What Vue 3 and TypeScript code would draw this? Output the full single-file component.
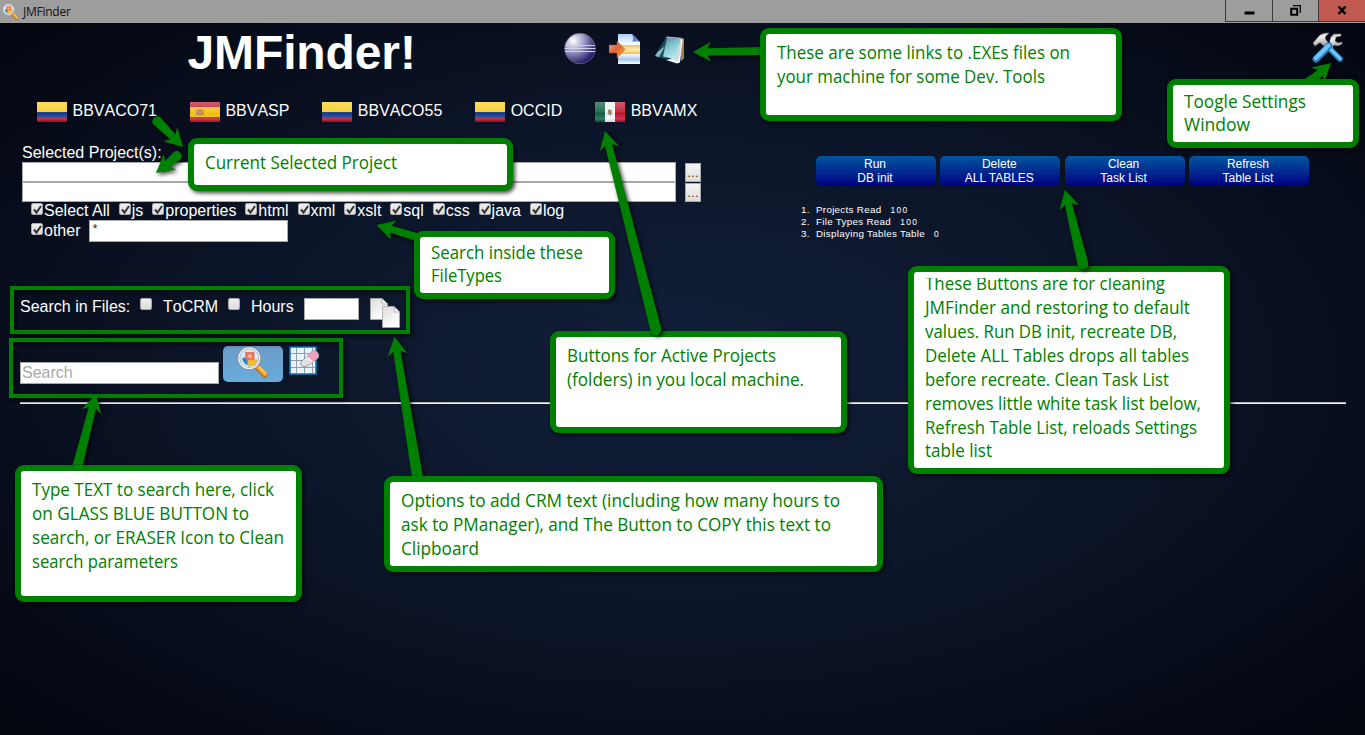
<script setup lang="ts">
interface Project { name: string; flag: 'co' | 'es' | 'mx' }
interface Line { t: string; y: number; w: number }
interface Callout { x: number; y: number; w: number; h: number; tx: number; lines: Line[]; clip?: number }
interface Arrow { from: [number, number]; to: [number, number]; tail: number; round?: boolean; under?: boolean }

const projects: Project[] = [
  { name: 'BBVACO71', flag: 'co' },
  { name: 'BBVASP', flag: 'es' },
  { name: 'BBVACO55', flag: 'co' },
  { name: 'OCCID', flag: 'co' },
  { name: 'BBVAMX', flag: 'mx' },
]
const fileTypes = ['Select All', 'js', 'properties', 'html', 'xml', 'xslt', 'sql', 'css', 'java', 'log']
const actions = [['Run', 'DB init'], ['Delete', 'ALL TABLES'], ['Clean', 'Task List'], ['Refresh', 'Table List']]
const tasks = [
  { label: 'Projects Read', value: '100' },
  { label: 'File Types Read', value: '100' },
  { label: 'Displaying Tables Table', value: '0' },
]

const callouts: Callout[] = [
  { x: 760, y: 28, w: 362, h: 93, tx: 777, lines: [
    { t: 'These are some links to .EXEs files on', y: 59, w: 293 },
    { t: 'your machine for some Dev. Tools', y: 83, w: 268 }] },
  { x: 1167, y: 79, w: 192, h: 69, tx: 1184, lines: [
    { t: 'Toogle Settings', y: 108, w: 122 },
    { t: 'Window', y: 131, w: 66 }] },
  { x: 188, y: 138, w: 325, h: 53, tx: 205, lines: [{ t: 'Current Selected Project', y: 169, w: 192 }] },
  { x: 414, y: 231, w: 201, h: 68, tx: 431, lines: [
    { t: 'Search inside these', y: 259, w: 152 },
    { t: 'FileTypes', y: 282, w: 71 }] },
  { x: 550, y: 331, w: 297, h: 102, tx: 567, lines: [
    { t: 'Buttons for Active Projects', y: 362, w: 209 },
    { t: '(folders) in you local machine.', y: 386, w: 237 }] },
  { x: 908, y: 266, w: 322, h: 208, tx: 925, clip: 278, lines: [
    { t: 'These Buttons are for cleaning', y: 290, w: 240 },
    { t: 'JMFinder and restoring to default', y: 314, w: 265 },
    { t: 'values. Run DB init, recreate DB,', y: 338, w: 252 },
    { t: 'Delete ALL Tables drops all tables', y: 362, w: 264 },
    { t: 'before recreate. Clean Task List', y: 386, w: 244 },
    { t: 'removes little white task list below,', y: 410, w: 276 },
    { t: 'Refresh Table List, reloads Settings', y: 434, w: 272 },
    { t: 'table list', y: 457, w: 67 }] },
  { x: 15, y: 465, w: 287, h: 137, tx: 32, lines: [
    { t: 'Type TEXT to search here, click', y: 496, w: 242 },
    { t: 'on GLASS BLUE BUTTON to', y: 520, w: 217 },
    { t: 'search, or ERASER Icon to Clean', y: 544, w: 252 },
    { t: 'search parameters', y: 568, w: 146 }] },
  { x: 384, y: 476, w: 499, h: 96, tx: 401, lines: [
    { t: 'Options to add CRM text (including how many hours to', y: 507, w: 439 },
    { t: 'ask to PManager), and The Button to COPY this text to', y: 531, w: 430 },
    { t: 'Clipboard', y: 555, w: 78 }] },
]

const arrows: Arrow[] = [
  { from: [764, 51], to: [693, 52], tail: 4, under: true },
  { from: [1308, 84], to: [1331, 63], tail: 6, under: true },
  { from: [157, 121], to: [183, 147], tail: 5, round: true },
  { from: [177, 156], to: [156, 173], tail: 5, round: true },
  { from: [420, 238], to: [376.5, 225], tail: 4, under: true },
  { from: [656, 330], to: [605, 131], tail: 5.5, round: true },
  { from: [1083, 264], to: [1065, 190], tail: 5.5, round: true },
  { from: [77, 468], to: [96, 394], tail: 5, under: true },
  { from: [418, 480], to: [394.5, 337], tail: 5.5, under: true },
]
const under = arrows.filter(a => a.under)
const over = arrows.filter(a => !a.under)

function shape(a: Arrow): string {
  const dx = a.to[0] - a.from[0]
  const dy = a.to[1] - a.from[1]
  const len = Math.hypot(dx, dy)
  const ux = dx / len
  const uy = dy / len
  const p = (back: number, side: number) =>
    `${(a.to[0] - ux * back - uy * side).toFixed(1)} ${(a.to[1] - uy * back + ux * side).toFixed(1)}`
  const end = a.round ? `A${a.tail} ${a.tail} 0 0 0 ${p(len, a.tail)}` : `L${p(len, a.tail)}`
  return `M${p(0, 0)}L${p(18, -10)}L${p(14.5, -3.6)}L${p(len, -a.tail)}${end}L${p(14.5, 3.6)}L${p(18, 10)}Z`
}
</script>

<template>
  <div class="window">
    <svg class="defs" width="0" height="0">
      <defs>
        <linearGradient id="gloss" x2="0" y2="1"><stop stop-color="#fff" stop-opacity=".3" /><stop offset=".5" stop-color="#fff" stop-opacity=".12" /><stop offset=".55" stop-color="#fff" stop-opacity="0" /><stop offset=".85" stop-color="#fff" stop-opacity=".18" /><stop offset="1" stop-color="#000" stop-opacity=".1" /></linearGradient>
        <radialGradient id="ball" cx=".28" cy=".25" r=".8"><stop stop-color="#fff" /><stop offset=".4" stop-color="#a9a7cc" /><stop offset=".75" stop-color="#55518c" /><stop offset="1" stop-color="#1d1866" /></radialGradient>
        <linearGradient id="orange" x2="1" y2="1"><stop stop-color="#e9a18a" /><stop offset=".5" stop-color="#e0663a" /><stop offset="1" stop-color="#ffc21b" /></linearGradient>
        <linearGradient id="sheet" x2="0" y2="1"><stop stop-color="#a9cdf3" /><stop offset=".3" stop-color="#f6faff" /><stop offset=".65" stop-color="#fff" /><stop offset=".85" stop-color="#a5cbf5" /><stop offset="1" stop-color="#fff" /></linearGradient>
        <linearGradient id="gold" x2="0" y2="1"><stop stop-color="#f4c24f" /><stop offset=".5" stop-color="#ffeeb5" /><stop offset="1" stop-color="#f5bf3c" /></linearGradient>
        <linearGradient id="teal" x2=".5" y2="1"><stop stop-color="#4b8f9d" /><stop offset=".5" stop-color="#86c9d6" /><stop offset="1" stop-color="#b5ebf1" /></linearGradient>
        <linearGradient id="steel" x2=".3" y2="1"><stop stop-color="#9e9ea2" /><stop offset=".4" stop-color="#f4f4f4" /><stop offset="1" stop-color="#a5a5a9" /></linearGradient>
        <linearGradient id="paper" x2=".5" y2="1"><stop stop-color="#dcdcdc" /><stop offset="1" stop-color="#fff" /></linearGradient>
        <symbol id="glass" viewBox="0 0 30 30">
          <path d="M19 20l7 7" stroke="#b8701c" stroke-width="5.4" stroke-linecap="round" />
          <path d="M20 20l6.4 6.4" stroke="#ffa928" stroke-width="3.8" stroke-linecap="round" />
          <path d="M21.5 20l5 5" stroke="#ffe08a" stroke-width="1.2" stroke-linecap="round" />
          <circle cx="11.5" cy="11.5" r="9.8" fill="#d6ecfa" stroke="#8a8f96" stroke-width="2.4" />
          <circle cx="11.5" cy="11.5" r="9.7" fill="none" stroke="#f3f5f7" stroke-width="1.3" />
          <path d="M5 11h5v7Q5 16 5 11z" fill="#2687cf" />
          <path d="M8 6h8v7H8z" fill="#f17352" stroke="#d9552f" stroke-width=".5" /><path d="M10 8h4v3h-4z" fill="#ffb39b" />
          <path d="M11 13h8l-2 4-6 2z" fill="#f8bf2a" stroke="#d59112" stroke-width=".5" />
        </symbol>
        <symbol id="flag-co" viewBox="0 0 30 20"><path fill="#f8cb1d" d="M0 0h30v10H0z" /><path fill="#12398d" d="M0 10h30v5H0z" /><path fill="#b20a29" d="M0 15h30v5H0z" /><path fill="url(#gloss)" d="M0 0h30v20H0z" /></symbol>
        <symbol id="flag-es" viewBox="0 0 30 20">
          <path fill="#c4122e" d="M0 0h30v20H0z" /><path fill="#f0bd0e" d="M0 5h30v10H0z" />
          <path d="M7.500 8h5v4q-2.500 2.800-5 0z" fill="#b4663c" /><path d="M6.500 8v5.500M13.500 8v5.500M8.500 7.500h3" stroke="#a98f62" /><path d="M9 9h2v3H9z" fill="#cda58a" /><path fill="url(#gloss)" d="M0 0h30v20H0z" />
        </symbol>
        <symbol id="flag-mx" viewBox="0 0 30 20">
          <path fill="#07603f" d="M0 0h10v20H0z" /><path fill="#f1f1f1" d="M10 0h10v20H10z" /><path fill="#bd1028" d="M20 0h10v20H20z" />
          <path d="M13 8q2-2 4 1l-1 3h-2q-2-2-1-4z" fill="#8c7951" /><path d="M12.500 11q2.500 4 5 0" fill="none" stroke="#699174" /><path fill="url(#gloss)" d="M0 0h30v20H0z" />
        </symbol>
      </defs>
    </svg>

    <header class="titlebar">
      <svg class="app-icon" width="17" height="17"><use href="#glass" /></svg>
      <span class="app-name">JMFinder</span>
      <div class="controls">
        <button class="ctl"><svg width="11" height="11"><path d="M.5 8h10" stroke="#000" stroke-width="3" /></svg></button>
        <button class="ctl mid"><svg width="11" height="11" fill="none" stroke="#000"><path d="M1.2 3.7h6v6h-6z" stroke-width="2" /><path d="M3 .7h7.3V8" stroke-width="1.2" /></svg></button>
        <button class="ctl close"><svg width="11" height="11"><path d="M1.5 1.500l7 7.500M8.500 1.500L1.500 9" stroke="#000" stroke-width="2.500" /></svg></button>
      </div>
    </header>

    <div class="banner">
      <h1>JMFinder!</h1>
      <nav class="tools">
        <svg width="32" height="32" viewBox="0 0 32 32"><circle cx="16" cy="15.500" r="15.300" fill="url(#ball)" stroke="#78618b" stroke-width=".8" /><path d="M1 12.500h30M.6 15.500h30.800M.8 18.500h30.400" stroke="#cfcfe8" stroke-width="1.200" /></svg>
        <svg width="32" height="32" viewBox="0 0 32 32">
          <path d="M9 1h14l8 8v22H9z" fill="url(#sheet)" /><path d="M23 1l8 8q-4-1.500-7.500 0 1.500-4-.500-8z" fill="#4f86cf" />
          <path d="M9 12h22v9H9z" fill="url(#gold)" />
          <path d="M0 12h8V8l8 8.500-8 8.500v-5H0z" fill="url(#orange)" stroke="#a74a20" stroke-width=".5" />
        </svg>
        <svg width="32" height="32" viewBox="0 0 32 32">
          <path d="M26 5l4 .500v20L27 28z" fill="#a37f4e" />
          <path d="M27 5.500l1.800 1L26 29.500l-3 1L12 27l8-2z" fill="#eef2f5" />
          <path d="M12 4L1 23l11 3.500L17 10z" fill="#1e4c56" /><path d="M3.500 19L1 23l4 1.200L11 13z" fill="#7fb9c3" />
          <path d="M13 5l14 1-6.500 20.500L9 23.500z" fill="url(#teal)" /><path d="M20 26.500L27 6l-.500 12-3.500 11z" fill="#cfd8dd" />
          <path d="M12.500 4.200l14.500 1.300" stroke="#aeb9be" stroke-width="1.600" />
        </svg>
      </nav>
      <svg class="settings" width="32" height="32" viewBox="0 0 32 32">
        <path d="M17 16L28 27" stroke="#2382c4" stroke-width="6" stroke-linecap="round" /><path d="M19 17.500L28 26.500" stroke="#7ac5f2" stroke-width="3" stroke-linecap="round" />
        <path d="M13 12l5 5" stroke="#c9c9cc" stroke-width="3.600" />
        <path d="M1 11L8 3q4-2.500 9-2l-2 2q-3 2-1 5l2 2-4 4-4-3.500-5 3.500z" fill="url(#steel)" stroke="#77777b" stroke-width=".6" />
        <path d="M19 13l-2 4" stroke="#d8d8db" stroke-width="5" />
        <path d="M18 12q-1-7 4-10h7v2l-5 1-1 4 3 2 4-1v2q-4 3-8 1l-3 3z" fill="url(#steel)" stroke="#77777b" stroke-width=".5" />
        <path d="M17 14L4 27" stroke="#2382c4" stroke-width="7" stroke-linecap="round" /><path d="M16.500 13.500L4 26" stroke="#75c1f1" stroke-width="4" stroke-linecap="round" />
      </svg>
    </div>

    <nav class="projects">
      <a v-for="p in projects" :key="p.name"><svg width="30" height="20"><use :href="'#flag-' + p.flag" /></svg>{{ p.name }}</a>
    </nav>

    <main class="content">
      <section class="selection">
        <div class="label">Selected Project(s):</div>
        <div v-for="n in 2" :key="n" class="path-row"><input type="text" class="path"><button class="browse">...</button></div>
        <div class="types">
          <span v-for="t in fileTypes" :key="t" class="type"><i class="box on"><svg width="11" height="11"><path d="M2 5.500l2.500 3L9 2" /></svg></i>{{ t }}</span>
        </div>
        <div class="types other">
          <span class="type"><i class="box on"><svg width="11" height="11"><path d="M2 5.500l2.500 3L9 2" /></svg></i>other</span>
          <input type="text" class="mask" value="*">
        </div>
      </section>
      <section class="database">
        <div class="actions"><button v-for="a in actions" :key="a[0]">{{ a[0] }}<br>{{ a[1] }}</button></div>
        <ol class="tasks"><li v-for="(t, i) in tasks" :key="t.label"><span class="num">{{ i + 1 }}.</span>{{ t.label }}<span class="val">{{ t.value }}</span></li></ol>
      </section>
    </main>

    <div class="crm">
      <span class="caption">Search in Files:</span><i class="box" /><span class="to-crm">ToCRM</span><i class="box" /><span class="hours">Hours</span>
      <input type="text" class="hours-input">
      <svg class="copy" width="30" height="30" fill="url(#paper)" stroke="#a8a8a8" stroke-width=".8"><path d="M.5.5H12l5.500 5.500v15.500H.5z" /><path d="M12 .5V6h5.500" /><path d="M12.500 8.500H24l5.500 5.500v15.500h-17z" /><path d="M24 8.500V14h5.500" /></svg>
    </div>

    <div class="search">
      <input type="text" placeholder="Search">
      <button class="go"><svg width="32" height="32"><use href="#glass" /></svg></button>
      <svg class="erase" width="31" height="30" viewBox="0 0 31 30">
        <path d="M1 1h26v27H1z" fill="#e9f5fc" stroke="#0878bd" stroke-width="1.600" /><path d="M7.500 2v25M15.500 2v25M23.500 2v25M2 7.500h24M2 14.500h24M2 21.500h24" stroke="#8f9ca4" />
        <path d="M12 16L22 6q3-3 6 0t1 6L20 19q-4 3-7 1t-1-4z" fill="#e3e3e6" stroke="#8b8187" stroke-width=".8" /><path d="M17.500 10.500L22 6q3-3 6 0t1 6l-5 4z" fill="#eba4bd" /><path d="M17.500 10.500l6.500 5.500" stroke="#fff" />
      </svg>
    </div>
    <div class="rule" />

    <svg class="notes" width="1365" height="735">
      <g class="frames"><rect x="12" y="288" width="396" height="44" /><rect x="11" y="340" width="330" height="56" /></g>
      <path v-for="(a, i) in under" :key="'u' + i" class="arrow" :d="shape(a)" />
      <g v-for="(c, i) in callouts" :key="i">
        <rect class="bubble" :x="c.x + 3" :y="c.y + 3" :width="c.w - 6" :height="c.h - 6" rx="6" />
        <text v-for="l in c.lines" :key="l.y" :x="c.tx" :y="l.y" :textLength="l.w" lengthAdjust="spacingAndGlyphs">{{ l.t }}</text>
        <rect v-if="c.clip" :x="c.tx - 5" :y="c.y + 6" :width="c.w - 30" :height="c.clip - c.y - 6" fill="#fff" />
      </g>
      <path v-for="(a, i) in over" :key="'o' + i" class="arrow" :d="shape(a)" />
    </svg>
  </div>
</template>

<style>
body { margin: 0; overflow: hidden; }
</style>
<style scoped>
.window { position: relative; width: 1365px; height: 735px; overflow: hidden; display: flex; flex-direction: column; color: #fff; font: 16px/18px "Liberation Sans", Arial, sans-serif; background: radial-gradient(ellipse farthest-corner at 50% 50%, #12203a 0%, #0b1427 50%, #03050e 100%); }
.window * { box-sizing: border-box; }
.defs { position: absolute; }
button, input { font-family: inherit; margin: 0; }
input { border: 1px solid #a9a9a9; background: #fff; border-radius: 0; outline: 0; }
.titlebar { height: 23px; flex: none; display: flex; background: #9d9d9d; color: #111; font: 12px/23px "Open Sans", sans-serif; }
.app-icon { margin: 3px 0 0 2px; }
.app-name { margin-left: 4px; letter-spacing: -.25px; }
.controls { display: flex; margin-left: auto; height: 22px; border: 1px solid #3c3c3c; border-top: 0; border-right: 0; }
.ctl { width: 46px; height: 21px; padding: 0; border: 0; background: none; display: flex; align-items: center; justify-content: center; }
.mid { width: 47px; border: solid #3c3c3c; border-width: 0 1px; }
.close { background: #c15a50; }
.banner { height: 79px; flex: none; display: flex; align-items: flex-start; }
h1 { margin: 2px 0 0 187.500px; width: 376.500px; font-size: 48px; line-height: 55px; letter-spacing: -.12px; }
.tools { display: flex; gap: 13px; margin-top: 10px; }
.settings { margin: 9px 21px 0 auto; }
.projects { height: 42px; flex: none; display: flex; gap: 32.900px; margin-left: 37px; font-kerning: none; }
.projects a { display: flex; gap: 5.500px; height: 20px; line-height: 18px; }
.content { height: 154px; flex: none; display: flex; }
.selection { width: 794px; padding-left: 22px; }
.label { height: 18px; line-height: 18px; }
.path-row { display: flex; height: 20px; }
.path { width: 654px; height: 20px; }
.browse { width: 16px; height: 19px; margin: 1px 0 0 9px; padding: 0; border: 1px solid #a9a9a9; background: linear-gradient(#f5f5f5, #ddd); color: #5b3410; font-size: 13px; line-height: 17px; letter-spacing: .3px; }
.types { display: flex; gap: 8.950px; height: 18px; padding-left: 9px; }
.type { display: flex; line-height: 18px; white-space: nowrap; }
.box { flex: none; width: 12px; height: 12px; margin: 1px 1px 0 0; border: 1px solid #aaa; border-radius: 2px; background: linear-gradient(#eee, #dcdcdc); }
.box svg { display: block; fill: none; stroke: #333; stroke-width: 2; }
.other { height: 22px; }
.other .type { padding-top: 2px; }
.mask { width: 199px; height: 22px; padding: 0 2px 5px; color: #333; font-size: 13px; }
.database { padding-top: 12px; }
.actions { display: flex; gap: 4.300px; margin-left: 22px; }
.actions button { width: 120px; height: 30px; padding: 0 2px 0 0; border: 0; border-radius: 5px; background: linear-gradient(#0256a0, #000080); color: #fff; font-size: 12px; line-height: 14px; }
.tasks { list-style: none; margin: 18px 0 0 7px; padding: 0; font-size: 9.800px; line-height: 12px; letter-spacing: .3px; }
.num { display: inline-block; width: 15px; }
.val { margin-left: 9px; font-size: 8.500px; letter-spacing: 1.300px; }
.crm { height: 48px; flex: none; display: flex; margin-left: 20px; font-kerning: none; }
.crm .box { margin: 0; height: 12px; }
.caption { width: 120px; }
.to-crm { width: 76px; padding-left: 11px; }
.hours { width: 64px; padding-left: 11px; }
.hours-input { width: 55px; height: 22px; }
.copy { margin-left: 11px; }
.search { height: 56px; flex: none; display: flex; margin-left: 20px; }
.search input { width: 199px; height: 22px; margin-top: 16px; padding: 0 1px; font-size: 16px; }
.search input::placeholder { color: #a9a9a9; opacity: 1; }
.go { width: 60px; height: 36px; margin-left: 4px; padding: 0; border: 0; border-radius: 5px; background: linear-gradient(#6b9bc8, #68acda); display: flex; justify-content: center; }
.erase { margin-left: 6px; }
.rule { flex: none; height: 2px; margin: 0 19px 0 20px; background: #f2f2f2; border-top: 1px solid #b5b5b5; }
.notes { position: absolute; left: 0; top: 0; font: 18px "Open Sans", "Noto Sans", sans-serif; fill: green; pointer-events: none; }
.frames rect { fill: none; stroke: green; stroke-width: 4; }
.frames, .arrow, .bubble { filter: drop-shadow(2px 2px 2px rgba(0, 0, 0, .75)); }
.bubble { fill: #fff; stroke: green; stroke-width: 6; }
</style>
